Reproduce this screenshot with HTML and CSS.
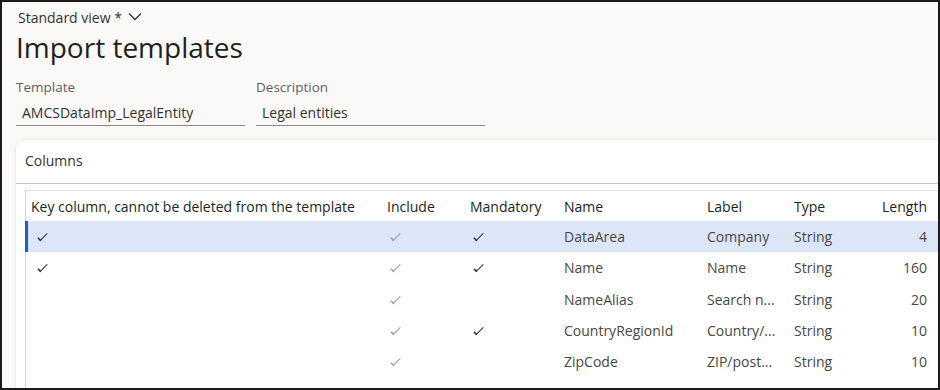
FILE: index.html
```html
<!DOCTYPE html>
<html lang="en">
<head>
    <meta charset="UTF-8">
    <title>Import templates</title>
    <link rel="stylesheet" href="styles.css">
</head>
<body>
    <div class="frame">
        <div class="view-picker">Standard view * <svg class="chevron" width="14" height="9" viewBox="0 0 14 9"><path d="M1 1.5 L7 7.5 L13 1.5" fill="none" stroke="#323130" stroke-width="1.3"/></svg></div>
        <h1 class="page-title">Import templates</h1>

        <div class="fields">
            <div class="field">
                <label>Template</label>
                <div class="field-value">AMCSDataImp_LegalEntity</div>
            </div>
            <div class="field">
                <label>Description</label>
                <div class="field-value">Legal entities</div>
            </div>
        </div>

        <div class="card">
            <div class="card-header">Columns</div>
            <div class="grid">
                <div class="row head">
                    <div class="cell">Key column, cannot be deleted from the template</div>
                    <div class="cell">Include</div>
                    <div class="cell">Mandatory</div>
                    <div class="cell">Name</div>
                    <div class="cell">Label</div>
                    <div class="cell">Type</div>
                    <div class="cell num">Length</div>
                </div>
                <div class="row selected">
                    <div class="cell key"><span class="check"></span></div>
                    <div class="cell"><span class="check dim"></span></div>
                    <div class="cell"><span class="check"></span></div>
                    <div class="cell">DataArea</div>
                    <div class="cell">Company</div>
                    <div class="cell">String</div>
                    <div class="cell num">4</div>
                </div>
                <div class="row">
                    <div class="cell key"><span class="check"></span></div>
                    <div class="cell"><span class="check dim"></span></div>
                    <div class="cell"><span class="check"></span></div>
                    <div class="cell">Name</div>
                    <div class="cell">Name</div>
                    <div class="cell">String</div>
                    <div class="cell num">160</div>
                </div>
                <div class="row">
                    <div class="cell key"></div>
                    <div class="cell"><span class="check dim"></span></div>
                    <div class="cell"></div>
                    <div class="cell">NameAlias</div>
                    <div class="cell">Search n...</div>
                    <div class="cell">String</div>
                    <div class="cell num">20</div>
                </div>
                <div class="row">
                    <div class="cell key"></div>
                    <div class="cell"><span class="check dim"></span></div>
                    <div class="cell"><span class="check"></span></div>
                    <div class="cell">CountryRegionId</div>
                    <div class="cell">Country/...</div>
                    <div class="cell">String</div>
                    <div class="cell num">10</div>
                </div>
                <div class="row">
                    <div class="cell key"></div>
                    <div class="cell"><span class="check dim"></span></div>
                    <div class="cell"></div>
                    <div class="cell">ZipCode</div>
                    <div class="cell">ZIP/post...</div>
                    <div class="cell">String</div>
                    <div class="cell num">10</div>
                </div>
            </div>
        </div>
    </div>
</body>
</html>
```

FILE: styles.css
```css
* {
    margin: 0;
    padding: 0;
    box-sizing: border-box;
}

body {
    font-family: 'Open Sans', 'Noto Sans', sans-serif;
    background: #ffffff;
    color: #323130;
}

.frame {
    width: 940px;
    height: 390px;
    border: 2px solid #1b1b1b;
    background: #faf9f8;
    padding: 7px 0 0 14px;
    overflow: hidden;
}

.view-picker {
    font-size: 14px;
    line-height: 18px;
    color: #323130;
    padding-left: 2px;
}

.chevron {
    margin-left: 2px;
    vertical-align: 2px;
}

.page-title {
    font-size: 28px;
    font-weight: 400;
    line-height: 36px;
    color: #201f1e;
    margin-top: 2px;
}

.fields {
    display: flex;
    gap: 11px;
    margin-top: 13px;
}

.field {
    width: 229px;
}

.field label {
    display: block;
    font-size: 13.5px;
    line-height: 18px;
    color: #605e5c;
}

.field-value {
    font-size: 14px;
    line-height: 20px;
    padding: 7px 6px 2px;
    border-bottom: 1px solid #8a8886;
    color: #323130;
}

.card {
    margin-top: 14px;
    background: #ffffff;
    border-radius: 8px 0 0 0;
    box-shadow: 0 0 3px rgba(0, 0, 0, 0.12);
    height: 260px;
    padding-left: 9px;
}

.card-header {
    font-size: 14px;
    line-height: 20px;
    padding: 11px 0 12px 9px;
    color: #323130;
    border-bottom: 1px solid #c8c6c4;
    margin-left: -9px;
}

.grid {
    margin-top: 6px;
    border-top: 1px solid #e1dfdd;
    border-left: 1px solid #d6d4d2;
    height: 220px;
}

.row {
    display: grid;
    grid-template-columns: 356px 83px 94px 143px 87px 76px 69px;
    height: 31.3px;
    align-items: center;
    font-size: 14px;
    color: #484644;
    margin-left: -1px;
}

.row.head {
    height: 30px;
    color: #201f1e;
}

.row.selected {
    background: #dce6f8;
    box-shadow: inset 3px 0 0 #1c5ed6;
}

.cell {
    padding: 0 6px;
    white-space: nowrap;
    overflow: hidden;
}

.row .cell:first-child {
    padding-left: 6px;
}

.cell.num {
    text-align: right;
}

.check {
    display: inline-block;
    width: 7px;
    height: 4px;
    border-left: 1.3px solid #323130;
    border-bottom: 1.3px solid #323130;
    transform: rotate(-45deg) scaleX(1.5);
    margin-left: 5px;
    margin-bottom: 4px;
}

.key .check {
    margin-left: 8px;
}

.check.dim {
    border-color: #a19f9d;
}
```
